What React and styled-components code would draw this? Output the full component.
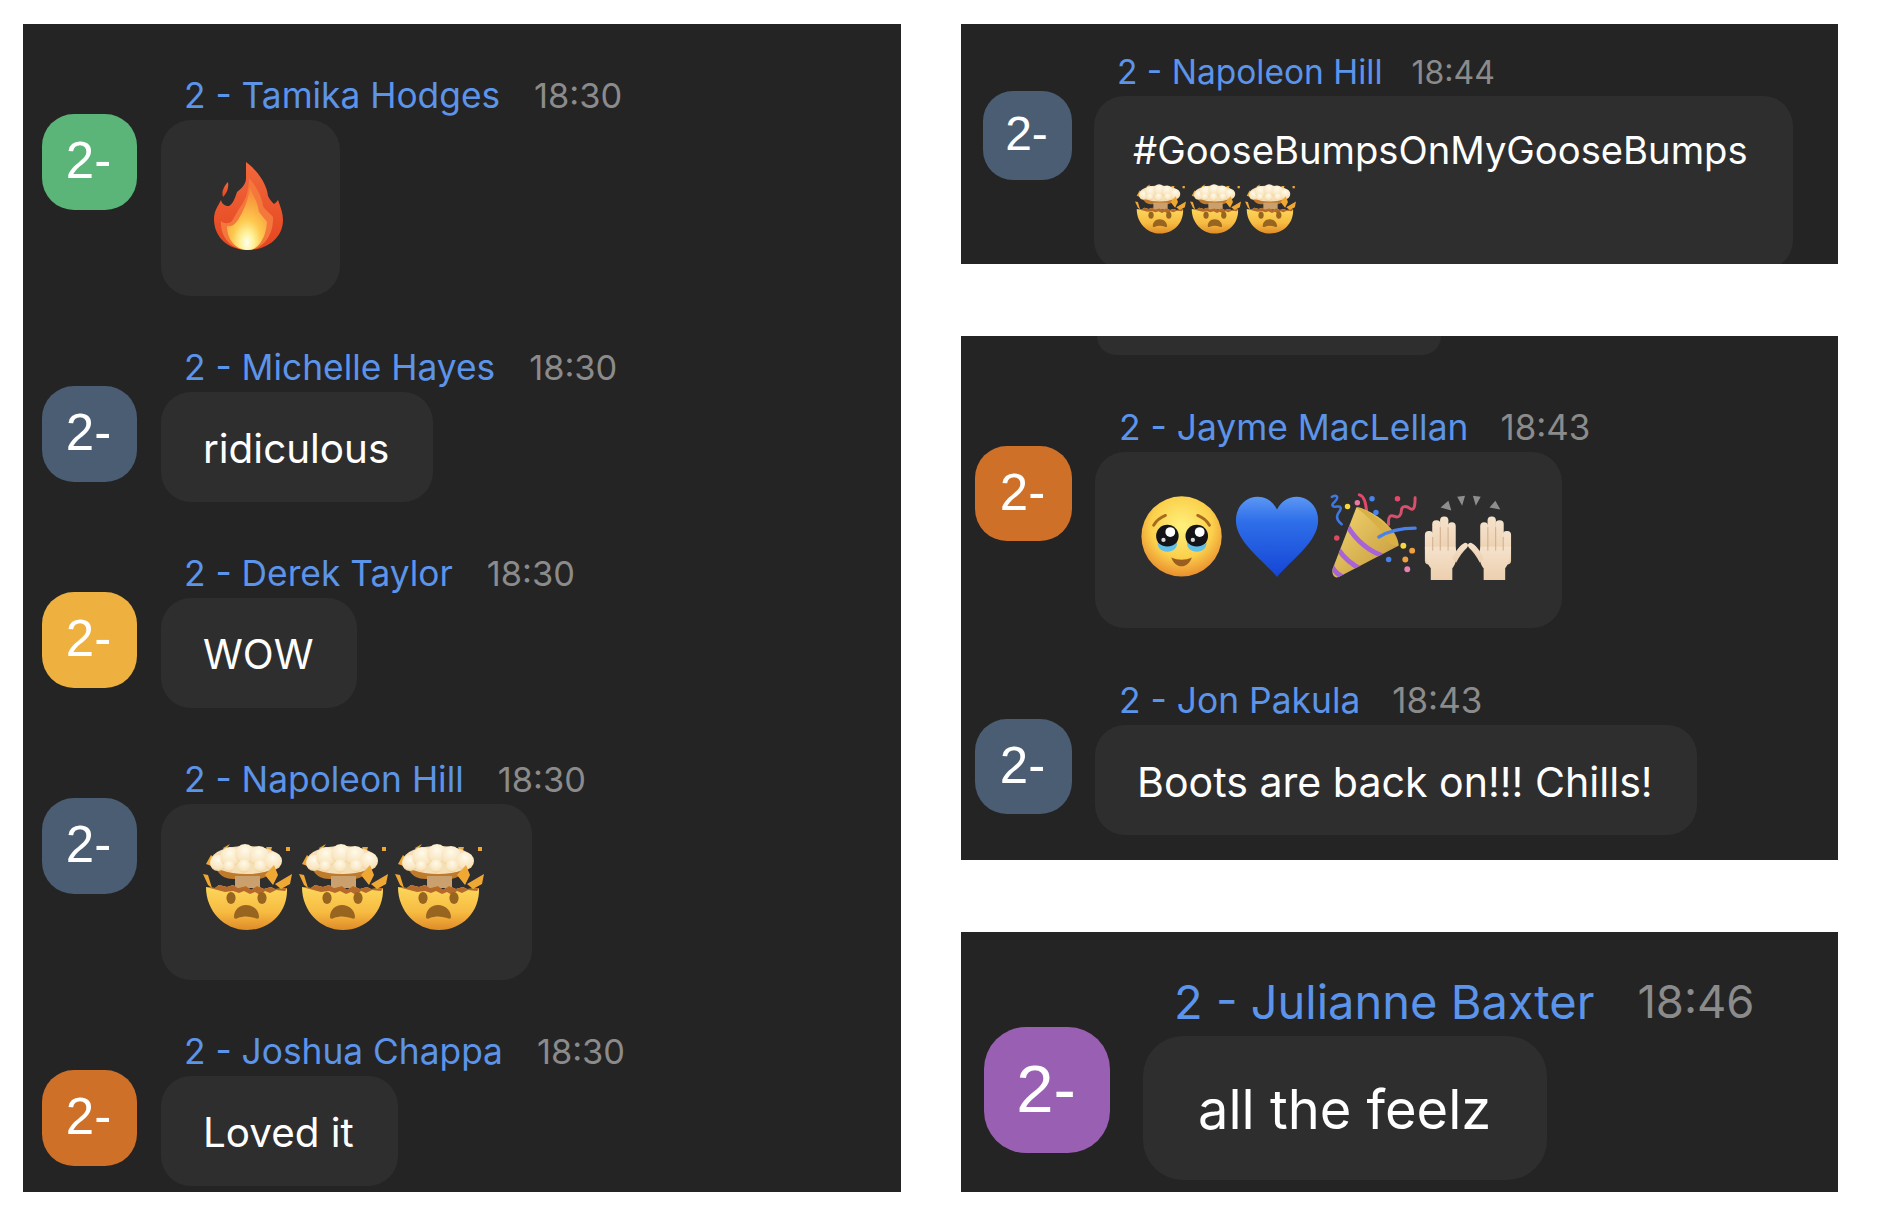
import React from "react";
import styled, { createGlobalStyle } from "styled-components";

const GlobalStyle = createGlobalStyle`
  html, body {
    margin: 0;
    background: #fff;
  }
  body {
    font-family: Inter, "Liberation Sans", sans-serif;
    -webkit-font-smoothing: antialiased;
  }
`;

// Per-panel sizes, the screenshots were taken at slightly different zooms
const LEFT = {
  pad: 19, top: 48, avatarW: 95, avatarH: 96, avatarTop: 42, avatarRadius: 32, avatarFont: 51,
  gap: 24, nameIndent: 23, nameLine: 48, nameLift: 2, nameFont: 35.3, timeGap: 34, timeFont: 34.4,
  bodyFont: 40.4, bodyPadL: 42, bodyPadR: 44, bodyPadTop: 29, bodyPadBottom: 25, radius: 30, rowGap: 48,
  emoji: 96, emojiPadL: 42, emojiPadR: 41, emojiPadB: 44,
};
const NAPOLEON = {
  ...LEFT, pad: 22, top: 24, avatarW: 89, avatarH: 89, avatarTop: 43, avatarRadius: 30, avatarFont: 48,
  gap: 22, nameIndent: 23, nameLift: 0, nameFont: 33.5, timeGap: 29, timeFont: 32, bodyFont: 38.2,
  bodyPadL: 39, bodyPadR: 39, bodyPadTop: 26, bodyPadBottom: 40, emoji: 55,
};
const JAYME = {
  ...LEFT, pad: 14, avatarW: 97, avatarH: 95, avatarTop: 43, gap: 23, nameIndent: 24, nameLine: 49, nameLift: 1,
  nameFont: 35.4, timeGap: 32, timeFont: 34.9, bodyFont: 41.1, emoji: 94, emojiPadL: 43, emojiPadR: 48, emojiPadB: 46,
};
const JULIANNE = {
  ...LEFT, pad: 23, top: 38, avatarW: 126, avatarH: 126, avatarTop: 57, avatarRadius: 42, avatarFont: 67,
  gap: 33, nameIndent: 31, nameLine: 66, nameLift: 4, nameFont: 47, timeGap: 43, timeFont: 45.4, bodyFont: 54.2,
  bodyPadL: 55, bodyPadR: 56, bodyPadTop: 45, bodyPadBottom: 43, radius: 40,
};

const AVATAR_COLORS = {
  green: "#5bb478",
  slate: "#4a5d73",
  amber: "#eeb03e",
  orange: "#cf7029",
  purple: "#995fb2",
};

const Page = styled.div`
  display: flex;
  gap: 60px;
  padding: 24px 23px;
  width: 1886px;
  height: 1216px;
  box-sizing: border-box;
`;

const RightColumn = styled.div`
  display: flex;
  flex-direction: column;
  gap: 72px;
  width: 877px;
`;

const Panel = styled.section`
  flex: none;
  width: ${(p) => p.$width}px;
  height: ${(p) => p.$height}px;
  padding: ${(p) => p.$m.top}px 0 0 ${(p) => p.$m.pad}px;
  box-sizing: border-box;
  background: #242424;
  overflow: hidden;
`;

const ClippedBubble = styled.div`
  width: 344px;
  height: 19px;
  margin: 0 0 48px 122px;
  background: #2e2e2e;
  border-radius: 0 0 30px 30px;
`;

const Row = styled.article`
  display: flex;
  align-items: flex-start;
  gap: ${(p) => p.$m.gap}px;
  margin-bottom: ${(p) => p.$m.rowGap}px;
`;

const Avatar = styled.div`
  flex: none;
  display: flex;
  align-items: center;
  justify-content: center;
  width: ${(p) => p.$m.avatarW}px;
  height: ${(p) => p.$m.avatarH}px;
  margin-top: ${(p) => p.$m.avatarTop}px;
  border-radius: ${(p) => p.$m.avatarRadius}px;
  background: ${(p) => AVATAR_COLORS[p.$color]};
  color: #fff;
  font-family: "Liberation Sans", sans-serif;
  font-size: ${(p) => p.$m.avatarFont}px;
  line-height: 1;
  padding: 0 2px 3px 0;
  box-sizing: border-box;
`;

const Content = styled.div`
  display: flex;
  flex-direction: column;
  align-items: flex-start;
  min-width: 0;
`;

const Meta = styled.div`
  display: flex;
  align-items: center;
  gap: ${(p) => p.$m.timeGap}px;
  height: ${(p) => p.$m.nameLine}px;
  padding: 0 0 ${(p) => p.$m.nameLift}px ${(p) => p.$m.nameIndent}px;
  box-sizing: border-box;
  white-space: nowrap;
`;

const Name = styled.span`
  color: #5c94ea;
  font-size: ${(p) => p.$m.nameFont}px;
`;

const Time = styled.span`
  color: #8b8b8b;
  font-size: ${(p) => p.$m.timeFont}px;
`;

const Bubble = styled.div`
  padding: ${(p) => p.$m.bodyPadTop}px ${(p) => p.$m.bodyPadR}px ${(p) => p.$m.bodyPadBottom}px ${(p) => p.$m.bodyPadL}px;
  border-radius: ${(p) => p.$m.radius}px;
  background: #2e2e2e;
  color: #fff;
  font-size: ${(p) => p.$m.bodyFont}px;
  line-height: 56px;
  white-space: nowrap;
`;

const EmojiBubble = styled.div`
  display: flex;
  padding: 36px ${(p) => p.$m.emojiPadR}px ${(p) => p.$m.emojiPadB}px ${(p) => p.$m.emojiPadL}px;
  border-radius: ${(p) => p.$m.radius}px;
  background: #2e2e2e;
`;

const WideBubble = styled(Bubble)`
  width: 699px;
  box-sizing: border-box;
`;

const EmojiLine = styled.div`
  display: flex;
  height: 48px;
  margin: 4px 0 0 2px;
`;

const Glyph = styled.svg`
  flex: none;
  display: block;
  width: ${(p) => p.$size}px;
  height: ${(p) => p.$size}px;
  filter: blur(0.4px);
`;

const Emoji = ({ size, children }) => (
  <Glyph $size={size} viewBox="0 0 96 96" aria-hidden="true">
    {children}
  </Glyph>
);

const Fire = ({ size }) => (
  <Emoji size={size}>
    <defs>
      <linearGradient id="fireOuter" x1="0" y1="0" x2="0" y2="1">
        <stop offset="0" stopColor="#f2683c" />
        <stop offset="1" stopColor="#e4451f" />
      </linearGradient>
      <radialGradient id="fireCore" cx="0.5" cy="0.88" r="0.82">
        <stop offset="0" stopColor="#fffef0" />
        <stop offset="0.2" stopColor="#fff29a" />
        <stop offset="0.45" stopColor="#fdc94f" />
        <stop offset="0.8" stopColor="#f9a13f" />
        <stop offset="1" stopColor="#f68c3a" />
      </radialGradient>
    </defs>
    <g transform="translate(2 0)">
      <path d="M18 41c-2-5 1-11 5-15 1 6-1 11-5 15z" fill="url(#fireOuter)" />
      <path
        d="M41 6c11 8 21 22 22 34 2 4 4 6 6 8 2-1 3-3 4-4 3 8 5 14 5 20 0 18-16 30-35 30S9 82 9 63c0-8 4-13 7-19 1 4 4 6 8 6 4-2 6-8 8-14 5-4 9-8 9-14 0-5 0-10 0-16z"
        fill="url(#fireOuter)"
      />
      <path
        d="M44 22c7 8 13 18 14 28 2 4 7 7 10 11 1 16-9 33-25 33-16 0-28-12-27-29 3 3 8 3 11 0 3-5 6-11 9-15 5-7 8-16 8-28z"
        fill="#f4773c"
      />
      <path
        d="M45 32c4 9 8 15 9 24 3 4 6 7 8 10-1 15-8 28-19 28-12 0-21-10-21-24 5 1 8-2 11-6 5-8 10-19 12-32z"
        fill="url(#fireCore)"
      />
    </g>
  </Emoji>
);

const ExplodingHead = ({ size }) => (
  <Emoji size={size}>
    <defs>
      <linearGradient id="headFace" x1="0" y1="0" x2="0" y2="1">
        <stop offset="0" stopColor="#fcd95c" />
        <stop offset="0.6" stopColor="#f7bb42" />
        <stop offset="1" stopColor="#df8b27" />
      </linearGradient>
      <radialGradient id="headCloud" cx="0.5" cy="0.3" r="0.75">
        <stop offset="0" stopColor="#fffaea" />
        <stop offset="0.75" stopColor="#f8e4bd" />
        <stop offset="1" stopColor="#eec07a" />
      </radialGradient>
    </defs>
    <path d="M3 24l5-9 4 4 2 9zM20 8l7-4-5 7zM63 7l6 0-2 7zM83 7h4v4h-4zM0 34l5 1 4 13-4-3z" fill="#efa632" />
    <path d="M12 26h58l-2 7c-4 4-9 6-15 6H30c-8 0-15-4-18-13z" fill="#c07a2c" />
    <path d="M32 36h25v12H32z" fill="#c9a06e" />
    <ellipse cx="43" cy="20" rx="35" ry="14" fill="#f5dfb6" />
    <g fill="url(#headCloud)">
      <circle cx="15" cy="23" r="8" />
      <circle cx="27" cy="17" r="10" />
      <circle cx="42" cy="14" r="10" />
      <circle cx="56" cy="16" r="10" />
      <circle cx="70" cy="21" r="9" />
      <circle cx="26" cy="26" r="5.500" />
      <circle cx="41" cy="26" r="6.500" />
      <circle cx="57" cy="26" r="6" />
    </g>
    <path
      d="M3 47l9 1 4-3 8 2 6-2 5 3 8-2 5 4 6-4 7 3 7-2 4 2 12-1c1 24-17 42-40 42S3 71 3 47z"
      fill="url(#headFace)"
    />
    <path
      d="M3 47l9 1 4-3 8 2 6-2 5 3 8-2 5 4 6-4 7 3 7-2 4 2 12-1-2 3-9-1-6 3-5-2-5 4-5-3-5 2-6-3-5 2-6-2-8 1z"
      fill="#b5692a"
    />
    <path d="M62 35l9-10 4 10-5 10zM72 44l17-10-2 10-9 5z" fill="#f0a835" />
    <ellipse cx="28" cy="58" rx="4.600" ry="6" fill="#97651f" />
    <ellipse cx="59" cy="58" rx="4.600" ry="6" fill="#97651f" />
    <path d="M31 77c0-7 5-12 12-12s13 5 13 12c0 2-2 2-4 1-6-2-12-2-17 0-2 1-4 1-4-1z" fill="#97651f" />
  </Emoji>
);

const Pleading = ({ size }) => (
  <Emoji size={size}>
    <defs>
      <radialGradient id="pleadFace" cx="0.5" cy="0.38" r="0.64">
        <stop offset="0" stopColor="#fff27e" />
        <stop offset="0.6" stopColor="#fbd04c" />
        <stop offset="1" stopColor="#e8892b" />
      </radialGradient>
    </defs>
    <circle cx="44.500" cy="49.500" r="41" fill="url(#pleadFace)" />
    <path d="M16 38c3-5 7-8 12-10M73 38c-3-5-7-8-12-10" stroke="#a8691f" strokeWidth="3" strokeLinecap="round" fill="none" />
    <circle cx="30" cy="49" r="11.500" fill="#141418" />
    <circle cx="60" cy="49" r="11.500" fill="#141418" />
    <circle cx="33" cy="45" r="5" fill="#fff" />
    <circle cx="63" cy="45" r="5" fill="#fff" />
    <circle cx="26" cy="53" r="2.200" fill="#d8d8d8" />
    <circle cx="56" cy="53" r="2.200" fill="#d8d8d8" />
    <path d="M20 56c6 5 14 5 20 0 0 6-4 9-10 9s-10-3-10-9zM50 56c6 5 14 5 20 0 0 6-4 9-10 9s-10-3-10-9z" fill="#5fbfe8" />
    <path d="M34 71c7 3 14 3 21 0-2 6-6 9-10.500 9S36 77 34 71z" fill="#9a5f1e" />
  </Emoji>
);

const BlueHeart = ({ size }) => (
  <Emoji size={size}>
    <defs>
      <linearGradient id="heartFill" x1="0" y1="0" x2="0" y2="1">
        <stop offset="0" stopColor="#5c97f4" />
        <stop offset="0.3" stopColor="#2f6fe9" />
        <stop offset="1" stopColor="#1445d6" />
      </linearGradient>
    </defs>
    <path
      d="M46 91C30 72 4 55 4 33 4 18 15 9 26 9c9 0 16 5 20 13C50 14 57 9 66 9c11 0 22 9 22 24 0 22-26 39-42 58z"
      fill="url(#heartFill)"
    />
  </Emoji>
);

const PartyPopper = ({ size }) => (
  <Emoji size={size}>
    <defs>
      <linearGradient id="popperCone" x1="0" y1="0" x2="1" y2="1">
        <stop offset="0" stopColor="#f3d670" />
        <stop offset="1" stopColor="#c3963a" />
      </linearGradient>
      <clipPath id="popperClip">
        <path d="M7 82L31 20c18 2 44 24 43 39L13 91c-4 2-8-3-6-9z" />
      </clipPath>
    </defs>
    <path d="M6 9c6-3 7 1 3 5-4 3-3 6 2 5s5 2 2 6-2 8 3 12" stroke="#3f78e0" strokeWidth="2.600" fill="none" strokeLinecap="round" />
    <path d="M34 7c5 1 8 8 8 30" stroke="#e5476a" strokeWidth="3" fill="none" strokeLinecap="round" />
    <path d="M64 37c-1-8 2-10 6-8s7-1 7-6 5-5 9-2 5-3 5-11" stroke="#d9506e" strokeWidth="3" fill="none" strokeLinecap="round" />
    <path d="M7 82L31 20c18 2 44 24 43 39L13 91c-4 2-8-3-6-9z" fill="url(#popperCone)" />
    <g clipPath="url(#popperClip)" fill="none" stroke="#a864d6" strokeWidth="5">
      <path d="M22 39Q36 62 60 70" />
      <path d="M12 62Q22 77 38 84" />
      <path d="M6 80Q10 88 18 91" />
    </g>
    <path d="M31 20c6-4 44 26 43 39-7 0-13-5-14-8-2-8-20-24-29-31z" fill="#d9b045" />
    <path d="M54 50c10-6 23-9 37-9" stroke="#4b82ea" strokeWidth="3.500" fill="none" strokeLinecap="round" />
    <circle cx="22" cy="19" r="2.800" fill="#f5d83c" />
    <circle cx="32" cy="15" r="2.800" fill="#e879a4" />
    <circle cx="47" cy="11" r="2.800" fill="#4b82ea" />
    <circle cx="51" cy="25" r="2.800" fill="#4b82ea" />
    <circle cx="73" cy="11" r="2.800" fill="#e5476a" />
    <circle cx="11" cy="51" r="2.800" fill="#dc4a5e" />
    <circle cx="79" cy="59" r="3" fill="#f5d83c" />
    <circle cx="88" cy="64" r="3" fill="#f0a03c" />
    <circle cx="81" cy="73" r="3" fill="#f0a03c" />
    <circle cx="64" cy="73" r="2.800" fill="#4b82ea" />
    <circle cx="83" cy="83" r="3" fill="#ee7fb3" />
  </Emoji>
);

const Hand = () => (
  <g>
    <g fill="url(#handSkin)">
      <rect x="5" y="44" width="8.500" height="34" rx="4" />
      <rect x="12.500" y="33" width="8.500" height="38" rx="4" />
      <rect x="20.500" y="29" width="8.500" height="38" rx="4" />
      <rect x="28.500" y="35" width="8" height="34" rx="4" />
      <path d="M5 60h31l2 8c-1 8-3 12-5 14v12H11V82c-4-5-6-12-6-22z" />
      <path d="M33 72c3-7 8-14 13-16 3 0 4 3 2 5-4 4-8 9-11 15z" />
    </g>
    <path d="M13 50v14M20.700 40v24M28.700 40v24" stroke="#cfae8c" strokeWidth="1" />
  </g>
);

const RaisedHands = ({ size }) => (
  <Emoji size={size}>
    <defs>
      <linearGradient id="handSkin" x1="0" y1="0" x2="0" y2="1">
        <stop offset="0" stopColor="#f5e2cc" />
        <stop offset="1" stopColor="#eccfae" />
      </linearGradient>
    </defs>
    <path d="M21 20l8-7 3 10zM38 9l8-1-3 10zM54 8l8 1-5 9zM77 13l5 9-11-2z" fill="#8e8e8e" />
    <Hand />
    <g transform="matrix(-1 0 0 1 98 0)">
      <Hand />
    </g>
  </Emoji>
);

const Message = ({ m, color, name, time, children }) => (
  <Row $m={m}>
    <Avatar $m={m} $color={color}>2-</Avatar>
    <Content>
      <Meta $m={m}>
        <Name $m={m}>{name}</Name>
        <Time $m={m}>{time}</Time>
      </Meta>
      {children}
    </Content>
  </Row>
);

const App = () => (
  <>
    <GlobalStyle />
    <Page>
      <Panel $m={LEFT} $width={878} $height={1168}>
        <Message m={LEFT} color="green" name="2 - Tamika Hodges" time="18:30">
          <EmojiBubble $m={LEFT}>
            <Fire size={LEFT.emoji} />
          </EmojiBubble>
        </Message>
        <Message m={LEFT} color="slate" name="2 - Michelle Hayes" time="18:30">
          <Bubble $m={LEFT}>ridiculous</Bubble>
        </Message>
        <Message m={LEFT} color="amber" name="2 - Derek Taylor" time="18:30">
          <Bubble $m={LEFT}>WOW</Bubble>
        </Message>
        <Message m={LEFT} color="slate" name="2 - Napoleon Hill" time="18:30">
          <EmojiBubble $m={LEFT}>
            <ExplodingHead size={LEFT.emoji} />
            <ExplodingHead size={LEFT.emoji} />
            <ExplodingHead size={LEFT.emoji} />
          </EmojiBubble>
        </Message>
        <Message m={LEFT} color="orange" name="2 - Joshua Chappa" time="18:30">
          <Bubble $m={LEFT}>Loved it</Bubble>
        </Message>
      </Panel>

      <RightColumn>
        <Panel $m={NAPOLEON} $width={877} $height={240}>
          <Message m={NAPOLEON} color="slate" name="2 - Napoleon Hill" time="18:44">
            <WideBubble $m={NAPOLEON}>
              #GooseBumpsOnMyGooseBumps
              <EmojiLine>
                <ExplodingHead size={NAPOLEON.emoji} />
                <ExplodingHead size={NAPOLEON.emoji} />
                <ExplodingHead size={NAPOLEON.emoji} />
              </EmojiLine>
            </WideBubble>
          </Message>
        </Panel>

        <Panel $m={{ ...JAYME, top: 0 }} $width={877} $height={524}>
          <ClippedBubble />
          <Message m={JAYME} color="orange" name="2 - Jayme MacLellan" time="18:43">
            <EmojiBubble $m={JAYME}>
              <Pleading size={JAYME.emoji} />
              <BlueHeart size={JAYME.emoji} />
              <PartyPopper size={JAYME.emoji} />
              <RaisedHands size={JAYME.emoji} />
            </EmojiBubble>
          </Message>
          <Message m={JAYME} color="slate" name="2 - Jon Pakula" time="18:43">
            <Bubble $m={JAYME}>Boots are back on!!! Chills!</Bubble>
          </Message>
        </Panel>

        <Panel $m={JULIANNE} $width={877} $height={260}>
          <Message m={JULIANNE} color="purple" name="2 - Julianne Baxter" time="18:46">
            <Bubble $m={JULIANNE}>all the feelz</Bubble>
          </Message>
        </Panel>
      </RightColumn>
    </Page>
  </>
);

export default App;
